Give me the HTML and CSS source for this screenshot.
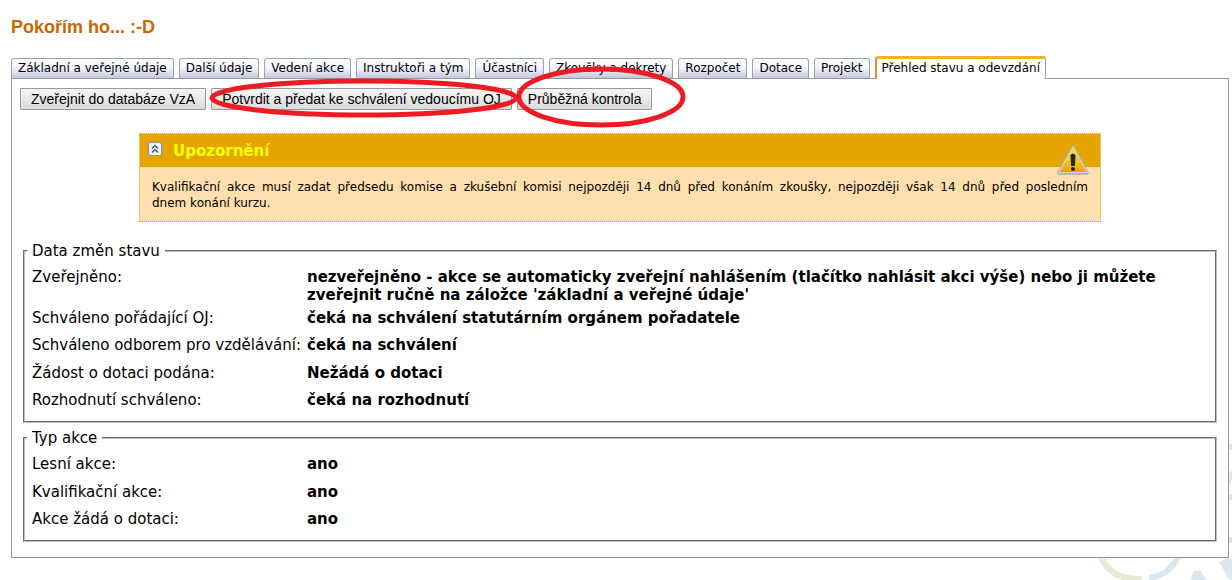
FILE: index.html
```html
<!DOCTYPE html>
<html lang="cs">
<head>
<meta charset="utf-8">
<title>Pokořím ho... :-D</title>
<link rel="stylesheet" href="styles.css">
</head>
<body>
<svg class="watermark" width="160" height="150" viewBox="0 0 160 150" fill="none" stroke-width="6" aria-hidden="true">
  <path stroke="#e8ebd3" d="M26 118Q36 149 70 147M164 39Q157 43 156 52"/>
  <path stroke="#dae7f1" d="M77 146Q102 142 108 118M156 15H160M156 65H160M156 108H160"/>
  <path fill="#dae7f1" d="M115 152Q120 148 121 139L128 138L137 152ZM147 130L157 125L162 130V150L156 146Z"/>
</svg>
<main class="page">
  <h1 class="title">Pokořím ho... :-D</h1>
  <nav class="tabs">
    <a class="tab" href="#">Základní a veřejné údaje</a>
    <a class="tab" href="#">Další údaje</a>
    <a class="tab" href="#">Vedení akce</a>
    <a class="tab" href="#">Instruktoři a tým</a>
    <a class="tab" href="#">Účastníci</a>
    <a class="tab" href="#">Zkoušky a dekrety</a>
    <a class="tab" href="#">Rozpočet</a>
    <a class="tab" href="#">Dotace</a>
    <a class="tab" href="#">Projekt</a>
    <a class="tab tab-active" href="#">Přehled stavu a odevzdání</a>
  </nav>
  <section class="panel">
    <div class="actions">
      <button class="action" type="button">Zveřejnit do databáze VzA</button>
      <button class="action" type="button">Potvrdit a předat ke schválení vedoucímu OJ</button>
      <button class="action" type="button">Průběžná kontrola</button>
    </div>
    <div class="notice">
      <div class="notice-head">
        <button class="collapse" type="button" aria-label="Sbalit">
          <svg width="14" height="14" viewBox="0 0 14 14" fill="none">
            <rect x=".5" y=".5" width="13" height="13" rx="2" fill="#edf4f8" stroke="#7199b0"/>
            <path d="M4 6.5 7 3.5 10 6.5M4 10.5 7 7.5 10 10.5" stroke="#445058" stroke-width="1.4"/>
          </svg>
        </button>
        <h2 class="notice-title">Upozornění</h2>
        <svg class="warning" width="34" height="32" viewBox="0 0 34 32" aria-hidden="true">
          <defs><linearGradient id="amber" x2="0" y2="1"><stop offset="0" stop-color="#f8e71c"/><stop offset=".5" stop-color="#f5cf16"/><stop offset="1" stop-color="#f79b08"/></linearGradient></defs>
          <path d="M17 3 31 29H3Z" fill="#bbb" stroke="#aaa" stroke-width="3.5" stroke-linejoin="round"/>
          <path d="M17 3 31 28.500H3Z" fill="none" stroke="#d5d5d5" stroke-width="1.5" stroke-linejoin="round"/>
          <path d="M17 4 30 28H4Z" fill="url(#amber)"/>
          <path d="M15 11Q17 9 19 11L18.500 21.500H15.500Z" fill="#222" stroke="#222"/>
          <circle cx="17" cy="25" r="2" fill="#222"/>
        </svg>
      </div>
      <p class="notice-text">Kvalifikační akce musí zadat předsedu komise a zkušební komisi nejpozději 14 dnů před konáním zkoušky, nejpozději však 14 dnů před posledním <span class="keep">dnem konání kurzu.</span></p>
    </div>
    <fieldset class="group">
      <legend>Data změn stavu</legend>
      <table class="facts">
        <tr><th scope="row">Zveřejněno:</th><td class="two-lines">nezveřejněno - akce se automaticky zveřejní nahlášením (tlačítko nahlásit akci výše) nebo ji můžete zveřejnit ručně na záložce 'základní a veřejné údaje'</td></tr>
        <tr><th scope="row">Schváleno pořádající OJ:</th><td>čeká na schválení statutárním orgánem pořadatele</td></tr>
        <tr><th scope="row">Schváleno odborem pro vzdělávání:</th><td>čeká na schválení</td></tr>
        <tr><th scope="row">Žádost o dotaci podána:</th><td>Nežádá o dotaci</td></tr>
        <tr><th scope="row">Rozhodnutí schváleno:</th><td>čeká na rozhodnutí</td></tr>
      </table>
    </fieldset>
    <fieldset class="group">
      <legend>Typ akce</legend>
      <table class="facts">
        <tr><th scope="row">Lesní akce:</th><td>ano</td></tr>
        <tr><th scope="row">Kvalifikační akce:</th><td>ano</td></tr>
        <tr><th scope="row">Akce žádá o dotaci:</th><td>ano</td></tr>
      </table>
    </fieldset>
  </section>
</main>
<svg class="marks" width="700" height="140" viewBox="0 0 700 140" fill="none" stroke="#ed1c24" stroke-width="5" aria-hidden="true">
  <ellipse cx="364" cy="98" rx="152" ry="17"/>
  <ellipse cx="601" cy="97" rx="82" ry="28"/>
</svg>
</body>
</html>
```
FILE: styles.css
```css
body {
  margin: 0;
  position: relative;
  min-height: 100vh;
  overflow: hidden;
  background: #fff;
  color: #000;
  font: 15px/18px "DejaVu Sans", Verdana, sans-serif;
}
.watermark { position: absolute; right: 0; bottom: 0; z-index: -1; }
.marks { position: absolute; left: 0; top: 0; pointer-events: none; }
.page { padding: 16px 3px 24px 11px; }
.title {
  margin: 0 0 18px;
  color: #cc6600;
  font: bold 18px/22px "Liberation Sans", Arial, sans-serif;
}
.tabs { display: flex; align-items: flex-end; gap: 5px; }
.tab {
  box-sizing: border-box;
  height: 20px;
  padding: 0 6px;
  border: 1px solid #91a7b4;
  border-bottom: 0;
  border-radius: 3px 3px 0 0;
  background: linear-gradient(#fff, #f3f3fd 50%, #c5c5de);
  color: #000;
  font-size: 12px;
  line-height: 19px;
  text-decoration: none;
  white-space: nowrap;
}
.tab-active {
  height: 23px;
  margin-bottom: -1px;
  padding: 0 5px;
  border-top: 3px solid #f5b02c;
  border-left: 2px solid #e68b2c;
  background: #fff;
  position: relative;
}
.panel { padding: 9px 11px 15px; border: 1px solid #919b9c; background: #fff; }
.actions { display: flex; gap: 5px; margin-left: -3px; }
.action {
  height: 22px;
  padding: 0 10px;
  border: 1px solid #999;
  border-radius: 1px;
  background: linear-gradient(#f5f5f5, #dcdcdc);
  color: #000;
  font: 14px/20px "Liberation Sans", Arial, sans-serif;
  white-space: nowrap;
}
.notice {
  margin: 23px 116px 20px;
  border: 1px dotted #e6a400;
  background: #ffdfad;
}
.notice-head {
  display: flex;
  align-items: center;
  height: 33px;
  padding: 0 10px 0 8px;
  background: #e6a400;
}
.collapse { width: 14px; height: 14px; margin-bottom: 4px; padding: 0; border: 0; background: none; line-height: 0; }
.notice-title { flex: 1; margin: 0 0 0 11px; color: #ff0; font-size: 15px; line-height: 18px; }
.warning { align-self: flex-end; margin-bottom: -9px; position: relative; }
.notice-text {
  margin: 0;
  padding: 12px 12px 10px;
  font-size: 12px;
  line-height: 16px;
  text-align: justify;
}
.keep { white-space: nowrap; }
.group { margin: 0 0 6px; padding: 8px 7px 2px; border: 2px groove #c0c0c0; }
.group:last-child { margin-bottom: 0; }
.group legend { padding: 0 5px; margin-left: -5px; }
.facts { width: 100%; border-collapse: collapse; }
.facts th, .facts td { height: 28px; padding: 0; text-align: left; vertical-align: top; }
.facts tr:nth-child(even) > * { height: 27px; }
.facts th { width: 275px; font-weight: normal; white-space: nowrap; }
.facts td { padding-right: 40px; font-weight: bold; }
.facts td.two-lines { height: 41px; }
```
